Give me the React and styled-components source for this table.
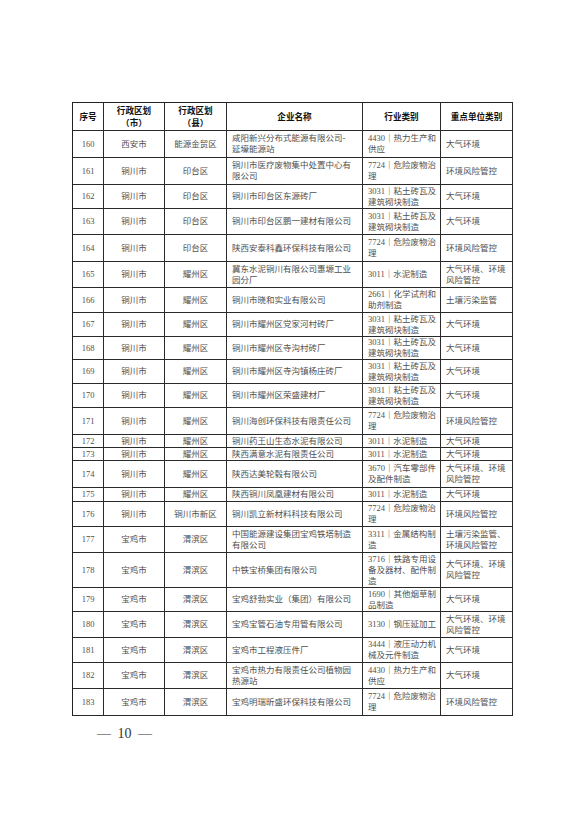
import React from "react";
import styled, { createGlobalStyle } from "styled-components";

const Global = createGlobalStyle`
  html, body { margin: 0; padding: 0; background: #ffffff; }
  * { box-sizing: border-box; }
`;

const Page = styled.div`
  width: 578px;
  min-height: 818px;
  padding: 102px 0 0 72px;
  font-family: "Liberation Serif", "Noto Sans CJK SC", serif;
`;

const Table = styled.div`
  width: 441px;
  border-top: 1px solid #222;
  border-left: 1px solid #222;
`;

const COLS = "31px 61px 62px 136px 78px 72px";

const Row = styled.div`
  display: grid;
  grid-template-columns: ${COLS};
  height: ${(p) => p.$h}px;
`;

const Cell = styled.div`
  display: flex;
  align-items: center;
  justify-content: ${(p) => (p.$left ? "flex-start" : "center")};
  text-align: ${(p) => (p.$left ? "left" : "center")};
  padding: 0 ${(p) => (p.$left ? "0 0 5px" : "0")};
  padding-left: ${(p) => (p.$left ? "5px" : "0")};
  border-right: 1px solid #2a2a2a;
  border-bottom: 1px solid #2a2a2a;
  font-size: 8.5px;
  line-height: 11px;
  color: #505050;
  white-space: pre;
  overflow: hidden;
`;

const HeadCell = styled(Cell)`
  font-weight: 700;
  color: #111;
  line-height: 12px;
  font-size: 8.6px;
`;

const PageNum = styled.div`
  margin-top: 10px;
  padding-left: 25px;
  font-family: "Liberation Serif", serif;
  font-size: 14px;
  line-height: 16px;
  color: #333;
  word-spacing: 3px;
`;

const rows = [
  { n: 160, city: "西安市", county: "能源金贸区", name: "咸阳新兴分布式能源有限公司-\n延壕能源站", ind: "4430｜热力生产和\n供应", key: "大气环境", h: 27 },
  { n: 161, city: "铜川市", county: "印台区", name: "铜川市医疗废物集中处置中心有\n限公司", ind: "7724｜危险废物治\n理", key: "环境风险管控", h: 27 },
  { n: 162, city: "铜川市", county: "印台区", name: "铜川市印台区东源砖厂", ind: "3031｜粘土砖瓦及\n建筑砌块制造", key: "大气环境", h: 24 },
  { n: 163, city: "铜川市", county: "印台区", name: "铜川市印台区鹏一建材有限公司", ind: "3031｜粘土砖瓦及\n建筑砌块制造", key: "大气环境", h: 26 },
  { n: 164, city: "铜川市", county: "印台区", name: "陕西安泰科鑫环保科技有限公司", ind: "7724｜危险废物治\n理", key: "环境风险管控", h: 27 },
  { n: 165, city: "铜川市", county: "耀州区", name: "冀东水泥铜川有限公司惠塬工业\n园分厂", ind: "3011｜水泥制造", key: "大气环境、环境\n风险管控", h: 26 },
  { n: 166, city: "铜川市", county: "耀州区", name: "铜川市晓和实业有限公司", ind: "2661｜化学试剂和\n助剂制造", key: "土壤污染监管", h: 25 },
  { n: 167, city: "铜川市", county: "耀州区", name: "铜川市耀州区党家河村砖厂", ind: "3031｜粘土砖瓦及\n建筑砌块制造", key: "大气环境", h: 24 },
  { n: 168, city: "铜川市", county: "耀州区", name: "铜川市耀州区寺沟村砖厂", ind: "3031｜粘土砖瓦及\n建筑砌块制造", key: "大气环境", h: 23 },
  { n: 169, city: "铜川市", county: "耀州区", name: "铜川市耀州区寺沟镇杨庄砖厂", ind: "3031｜粘土砖瓦及\n建筑砌块制造", key: "大气环境", h: 24 },
  { n: 170, city: "铜川市", county: "耀州区", name: "铜川市耀州区荣盛建材厂", ind: "3031｜粘土砖瓦及\n建筑砌块制造", key: "大气环境", h: 24 },
  { n: 171, city: "铜川市", county: "耀州区", name: "铜川海创环保科技有限责任公司", ind: "7724｜危险废物治\n理", key: "环境风险管控", h: 27 },
  { n: 172, city: "铜川市", county: "耀州区", name: "铜川药王山生态水泥有限公司", ind: "3011｜水泥制造", key: "大气环境", h: 13 },
  { n: 173, city: "铜川市", county: "耀州区", name: "陕西满意水泥有限责任公司", ind: "3011｜水泥制造", key: "大气环境", h: 13 },
  { n: 174, city: "铜川市", county: "耀州区", name: "陕西达美轮毂有限公司", ind: "3670｜汽车零部件\n及配件制造", key: "大气环境、环境\n风险管控", h: 27 },
  { n: 175, city: "铜川市", county: "耀州区", name: "陕西铜川凤凰建材有限公司", ind: "3011｜水泥制造", key: "大气环境", h: 14 },
  { n: 176, city: "铜川市", county: "铜川市新区", name: "铜川凯立新材料科技有限公司", ind: "7724｜危险废物治\n理", key: "环境风险管控", h: 25 },
  { n: 177, city: "宝鸡市", county: "渭滨区", name: "中国能源建设集团宝鸡铁塔制造\n有限公司", ind: "3311｜金属结构制\n造", key: "土壤污染监管、\n环境风险管控", h: 26 },
  { n: 178, city: "宝鸡市", county: "渭滨区", name: "中铁宝桥集团有限公司", ind: "3716｜铁路专用设\n备及器材、配件制\n造", key: "大气环境、环境\n风险管控", h: 35 },
  { n: 179, city: "宝鸡市", county: "渭滨区", name: "宝鸡舒勃实业（集团）有限公司", ind: "1690｜其他烟草制\n品制造", key: "大气环境", h: 24 },
  { n: 180, city: "宝鸡市", county: "渭滨区", name: "宝鸡宝管石油专用管有限公司", ind: "3130｜钢压延加工", key: "大气环境、环境\n风险管控", h: 26 },
  { n: 181, city: "宝鸡市", county: "渭滨区", name: "宝鸡市工程液压件厂", ind: "3444｜液压动力机\n械及元件制造", key: "大气环境", h: 25 },
  { n: 182, city: "宝鸡市", county: "渭滨区", name: "宝鸡市热力有限责任公司植物园\n热源站", ind: "4430｜热力生产和\n供应", key: "大气环境", h: 26 },
  { n: 183, city: "宝鸡市", county: "渭滨区", name: "宝鸡明瑞昕盛环保科技有限公司", ind: "7724｜危险废物治\n理", key: "环境风险管控", h: 27 },
];

export default function App() {
  return (
    <Page>
      <Global />
      <Table>
        <Row $h={28}>
          <HeadCell>序号</HeadCell>
          <HeadCell>{"行政区划\n（市）"}</HeadCell>
          <HeadCell>{"行政区划\n（县）"}</HeadCell>
          <HeadCell>企业名称</HeadCell>
          <HeadCell>行业类别</HeadCell>
          <HeadCell>重点单位类别</HeadCell>
        </Row>
        {rows.map((r) => (
          <Row key={r.n} $h={r.h}>
            <Cell>{r.n}</Cell>
            <Cell>{r.city}</Cell>
            <Cell>{r.county}</Cell>
            <Cell $left>{r.name}</Cell>
            <Cell $left>{r.ind}</Cell>
            <Cell $left>{r.key}</Cell>
          </Row>
        ))}
      </Table>
      <PageNum>— 10 —</PageNum>
    </Page>
  );
}
